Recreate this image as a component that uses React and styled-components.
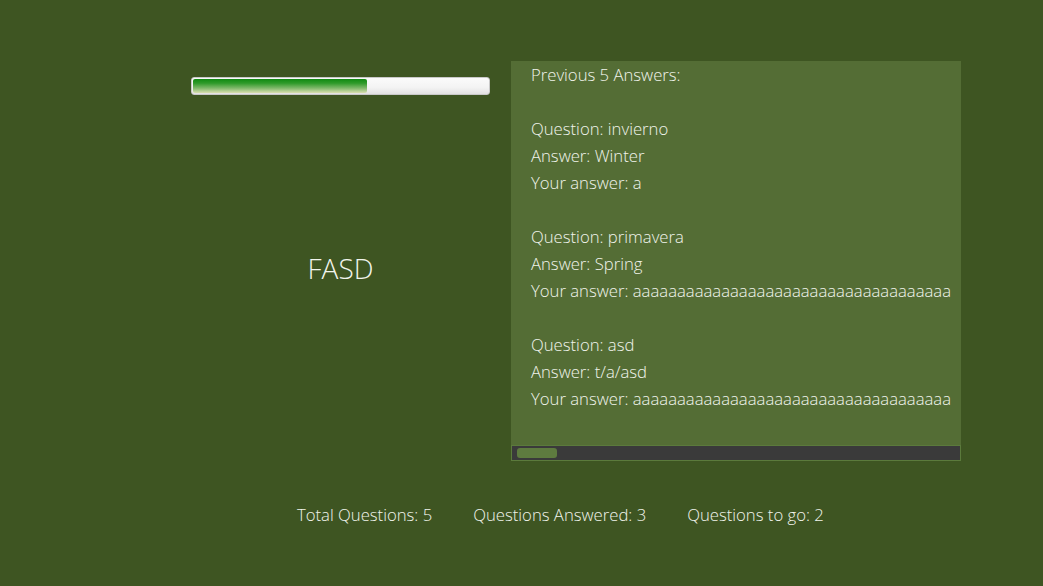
import styled, { createGlobalStyle } from "styled-components";

const GlobalStyle = createGlobalStyle`
  html, body {
    margin: 0;
    padding: 0;
    background: #3e5522;
  }
  body {
    font-family: "Open Sans", "Liberation Sans", sans-serif;
    font-weight: 300;
    color: #f1f4ec;
  }
`;

const Page = styled.div`
  width: 1043px;
  height: 586px;
  background: #3e5522;
  display: flex;
  flex-direction: column;
  padding: 61px 0 0 191px;
  box-sizing: border-box;
`;

const TopRow = styled.div`
  display: flex;
  gap: 21px;
`;

const LeftColumn = styled.div`
  width: 299px;
  display: flex;
  flex-direction: column;
  padding-top: 16px;
`;

const ProgressTrack = styled.div`
  height: 18px;
  box-sizing: border-box;
  border-radius: 3px;
  border: 1px solid #c9c9c9;
  background: linear-gradient(#fbfbfb 0%, #f3f3f3 60%, #e2e2e2 100%);
  padding: 1px;
  display: flex;
`;

const ProgressFill = styled.div`
  height: 100%;
  border-radius: 2px;
  background: linear-gradient(
    #118a12 0%,
    #2f9a2a 30%,
    #7fb86a 65%,
    #d9dfb0 100%
  );
`;

const Word = styled.div`
  flex: 1;
  display: flex;
  align-items: center;
  justify-content: center;
  font-size: 28px;
  padding-bottom: 20px;
`;

const Panel = styled.div`
  width: 450px;
  height: 400px;
  background: #546d35;
  display: flex;
  flex-direction: column;
`;

const Viewport = styled.div`
  flex: 1;
  overflow: hidden;
  margin-right: 10px;
  padding-left: 20px;
`;

const Line = styled.div`
  height: 27px;
  line-height: 27px;
  font-size: 16.7px;
  white-space: nowrap;
`;

const ScrollBar = styled.div`
  height: 16px;
  box-sizing: border-box;
  background: #3a3a3a;
  border: 1px solid #5b7a3c;
  padding: 2px 5px;
  display: flex;
`;

const Thumb = styled.div`
  width: 40px;
  border-radius: 3px;
  background: #5e7b3f;
`;

const Stats = styled.div`
  display: flex;
  gap: 41px;
  padding: 42px 0 0 106px;
  font-size: 16.7px;
`;

const lines = [
  "Previous 5 Answers:",
  "",
  "Question: invierno",
  "Answer: Winter",
  "Your answer: a",
  "",
  "Question: primavera",
  "Answer: Spring",
  "Your answer: " + "a".repeat(60),
  "",
  "Question: asd",
  "Answer: t/a/asd",
  "Your answer: " + "a".repeat(60),
];

export default function App() {
  return (
    <Page>
      <GlobalStyle />
      <TopRow>
        <LeftColumn>
          <ProgressTrack>
            <ProgressFill style={{ width: "59%" }} />
          </ProgressTrack>
          <Word>FASD</Word>
        </LeftColumn>
        <Panel>
          <Viewport>
            {lines.map((text, i) => (
              <Line key={i}>{text || "\u00a0"}</Line>
            ))}
          </Viewport>
          <ScrollBar>
            <Thumb />
          </ScrollBar>
        </Panel>
      </TopRow>
      <Stats>
        <span>Total Questions: 5</span>
        <span>Questions Answered: 3</span>
        <span>Questions to go: 2</span>
      </Stats>
    </Page>
  );
}
